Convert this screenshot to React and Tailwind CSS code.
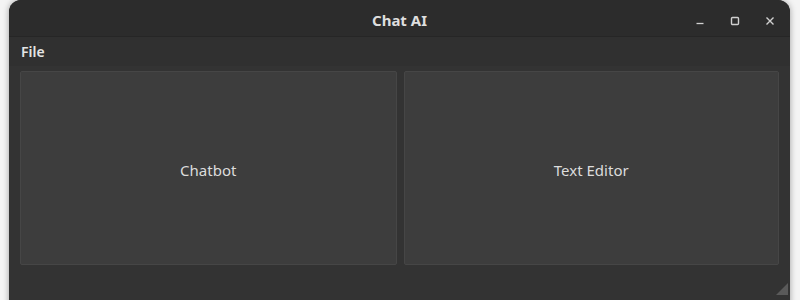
export default function App() {
  return (
    <div className="w-[800px] h-[300px] overflow-hidden bg-[#f4f4f4] pl-[9px] pr-[10px]" style={{ fontFamily: '"Noto Sans", "DejaVu Sans", sans-serif' }}>
      <div className="h-[320px] rounded-t-[12px] bg-[#333333] shadow-[0_0_6px_rgba(0,0,0,0.35)] flex flex-col overflow-hidden">
        {/* Title bar */}
        <div className="h-[37px] bg-[#2c2c2c] border-b border-[#262626] flex items-center relative shrink-0">
          <div className="flex-1 text-center text-[15px] font-bold text-[#dedede] pt-[4px]">Chat AI</div>
          <div className="absolute right-[12px] top-[3px] h-full flex items-center gap-[19px] text-[#d0d0d0]">
            <svg width="16" height="16" viewBox="0 0 16 16"><path d="M4.5 10.5h7" stroke="currentColor" strokeWidth="1.3" /></svg>
            <svg width="16" height="16" viewBox="0 0 16 16"><rect x="4.5" y="4.5" width="7" height="7" rx="1" fill="none" stroke="currentColor" strokeWidth="1.4" /></svg>
            <svg width="16" height="16" viewBox="0 0 16 16"><path d="M4.5 4.5l7 7M11.5 4.5l-7 7" stroke="currentColor" strokeWidth="1.4" /></svg>
          </div>
        </div>
        {/* Menu bar */}
        <div className="h-[29px] bg-[#303030] flex items-center px-[12px] shrink-0">
          <span className="text-[14px] font-semibold text-[#e4e4e4]">File</span>
        </div>
        {/* Body */}
        <div className="flex gap-[7px] px-[11px] pt-[5px]">
          <button className="w-[377px] h-[194px] bg-[#3d3d3d] border border-[#464646] rounded-[2px] text-[15px] text-[#dcdcdc] pt-[4px]">Chatbot</button>
          <button className="w-[376px] h-[194px] bg-[#3d3d3d] border border-[#464646] rounded-[2px] text-[15px] text-[#dcdcdc] pt-[4px]">Text Editor</button>
        </div>
        <div className="flex justify-end pr-[2px] pt-[18px]">
          <svg width="12" height="12" viewBox="0 0 12 12"><path d="M12 0L12 12L0 12Z" fill="#5a5a5a" /></svg>
        </div>
      </div>
    </div>
  );
}
